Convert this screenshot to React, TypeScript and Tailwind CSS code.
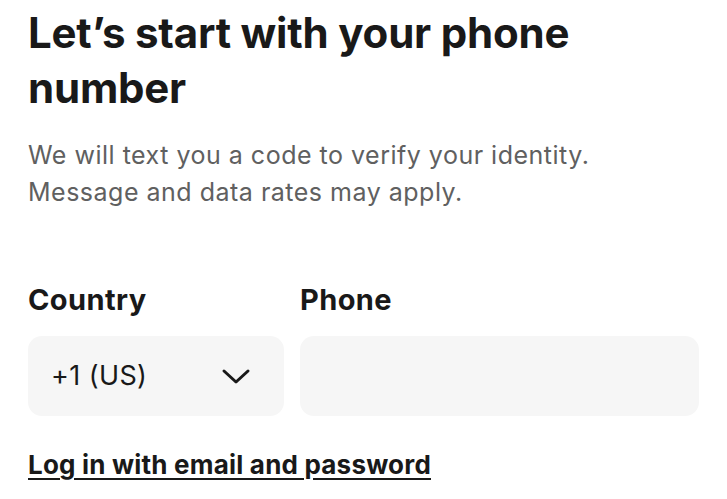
export default function App() {
  return (
    <div className="min-h-screen bg-white px-[28px] pt-[5px] text-[#191919]" style={{ fontFamily: "Inter, 'Noto Sans', sans-serif" }}>
      <h1 className="text-[42px] font-bold leading-[55px] tracking-[-0.2px]">
        Let’s start with your phone number
      </h1>
      <p className="mt-[22px] text-[25px] leading-[37px] tracking-[0.5px] text-[#606060]">
        We will text you a code to verify your identity.
        <br />
        Message and data rates may apply.
      </p>
      <div className="mt-[71px] flex gap-[16px]">
        <div className="flex w-[256px] shrink-0 flex-col gap-[18px]">
          <label className="text-[29px] font-bold leading-[36px] tracking-[0.4px]">Country</label>
          <button className="flex h-[80px] items-center justify-between rounded-[14px] bg-[#f6f6f6] pl-[23px] pr-[33px]">
            <span className="text-[27px] tracking-[0.4px]">+1 (US)</span>
            <svg width="30" height="20" viewBox="0 0 30 20" fill="none" stroke="#191919" strokeWidth="3" strokeLinecap="round" strokeLinejoin="round">
              <path d="M3 5 L15 16 L27 5" />
            </svg>
          </button>
        </div>
        <div className="flex min-w-0 flex-1 flex-col gap-[18px]">
          <label className="text-[29px] font-bold leading-[36px] tracking-[0.4px]">Phone</label>
          <input className="h-[80px] w-full min-w-0 rounded-[14px] bg-[#f6f6f6] px-[24px] text-[27px] outline-none" />
        </div>
      </div>
      <a href="#" className="mt-[33px] block text-[26px] font-bold leading-[32px] tracking-[0.2px] underline underline-offset-4">
        Log in with email and password
      </a>
    </div>
  );
}
